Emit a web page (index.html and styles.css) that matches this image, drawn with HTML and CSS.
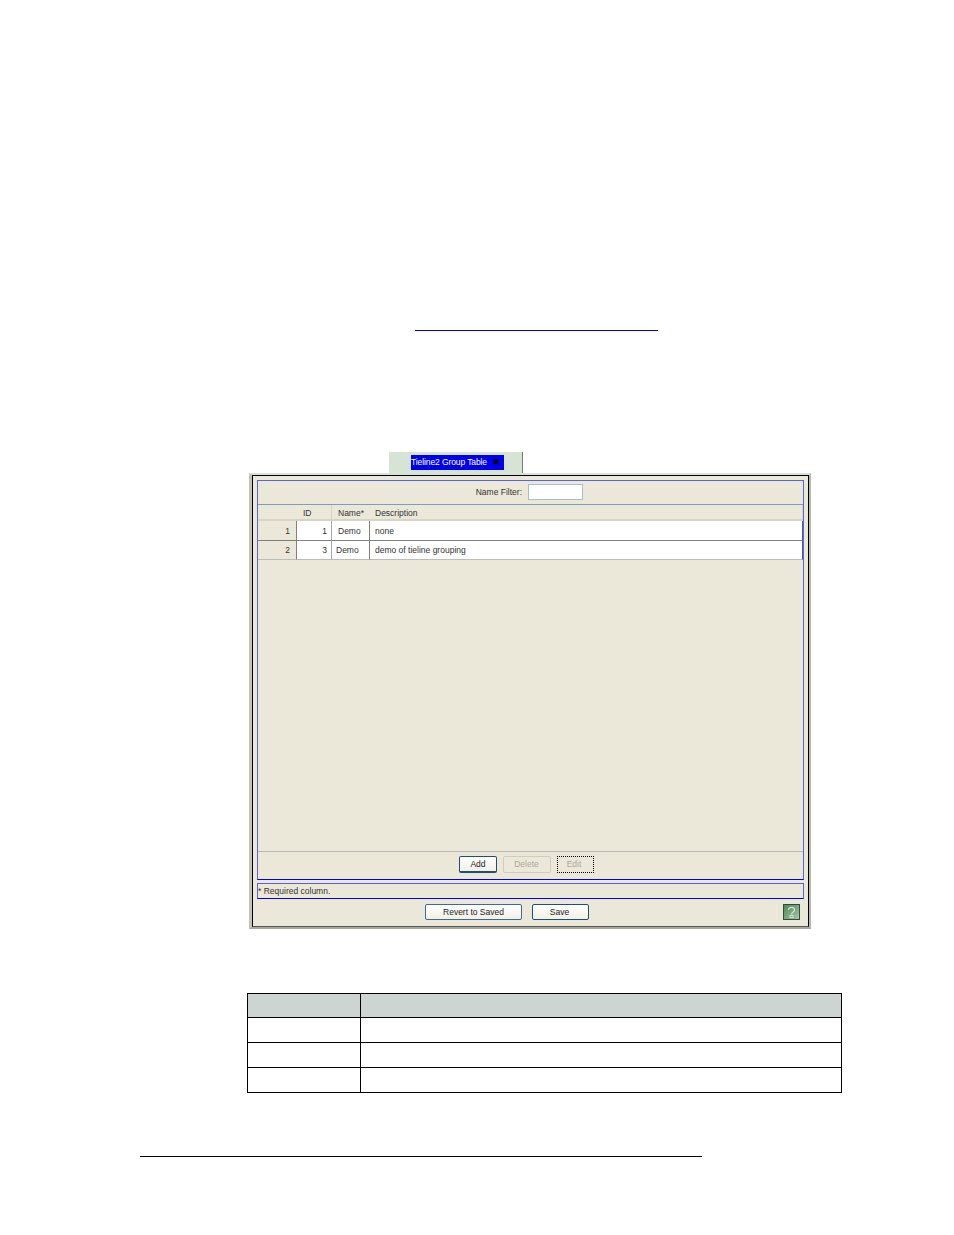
FILE: index.html
```html
<!DOCTYPE html>
<html lang="en">
<head>
    <meta charset="UTF-8">
    <title>Tieline2 Group Table</title>
    <link rel="stylesheet" href="styles.css">
</head>
<body>
    <div class="link-rule"></div>

    <div class="figure">
        <div class="tab">
            <span class="tab-title">Tieline2 Group Table<span class="tab-close">✖</span></span>
        </div>
        <div class="window">
            <div class="window-inner">
                <div class="panel">
                    <div class="filter-row">
                        <label class="filter-label">Name Filter:</label>
                        <input class="filter-input" type="text">
                    </div>
                    <table class="grid">
                        <colgroup>
                            <col class="col-head">
                            <col class="col-id">
                            <col class="col-name">
                            <col>
                        </colgroup>
                        <thead>
                            <tr>
                                <th></th>
                                <th class="th-id">ID</th>
                                <th class="th-name">Name*</th>
                                <th class="th-desc">Description</th>
                            </tr>
                        </thead>
                        <tbody>
                            <tr>
                                <td class="row-head">1</td>
                                <td class="cell-id">1</td>
                                <td class="cell-name">Demo</td>
                                <td class="cell-desc">none</td>
                            </tr>
                            <tr>
                                <td class="row-head">2</td>
                                <td class="cell-id">3</td>
                                <td class="cell-name cell-name-tight">Demo</td>
                                <td class="cell-desc">demo of tieline grouping</td>
                            </tr>
                        </tbody>
                    </table>
                    <div class="grid-space"></div>
                    <div class="button-bar">
                        <button class="btn btn-add">Add</button>
                        <button class="btn btn-delete" disabled>Delete</button>
                        <button class="btn btn-edit" disabled>Edit</button>
                    </div>
                </div>
                <div class="required-note">* Required column.</div>
                <div class="footer-row">
                    <button class="btn btn-revert">Revert to Saved</button>
                    <button class="btn btn-save">Save</button>
                    <div class="help-icon">
                        <svg width="17" height="16" viewBox="0 0 17 16">
                            <defs>
                                <linearGradient id="helpBg" x1="0" y1="0" x2="1" y2="1">
                                    <stop offset="0" stop-color="#4f8458"/>
                                    <stop offset="1" stop-color="#a5c8a8"/>
                                </linearGradient>
                            </defs>
                            <rect x="0.5" y="0.5" width="16" height="15" fill="url(#helpBg)" stroke="#2f4f38"/>
                            <path d="M5.5 6C5.5 2.5 11.5 2.5 11.5 6C11.5 8 8.5 8 8.5 10.5" fill="none" stroke="#d4e4d2" stroke-width="1.2"/>
                            <rect x="7" y="11.5" width="3" height="2" fill="none" stroke="#d4e4d2" stroke-width="0.9"/>
                        </svg>
                    </div>
                </div>
            </div>
        </div>
    </div>

    <table class="info-table">
        <colgroup>
            <col class="info-col">
            <col>
        </colgroup>
        <thead>
            <tr><th></th><th></th></tr>
        </thead>
        <tbody>
            <tr><td></td><td></td></tr>
            <tr><td></td><td></td></tr>
            <tr><td></td><td></td></tr>
        </tbody>
    </table>

    <div class="footer-rule"></div>
</body>
</html>
```

FILE: styles.css
```css
* {
    box-sizing: border-box;
}

body {
    margin: 0;
    background: #fff;
    font-family: 'Liberation Sans', Arial, sans-serif;
}

.link-rule {
    width: 243px;
    height: 1px;
    margin: 330px 0 0 415px;
    background: #0000c8;
}

.figure {
    width: 562px;
    margin: 121px 0 0 249px;
    font-size: 8.5px;
    color: #333;
}

.tab {
    width: 134px;
    height: 21px;
    margin-left: 140px;
    padding: 3px 0 0 22px;
    background: #d6e4d6;
    border-right: 1px solid #777;
}

.tab-title {
    display: block;
    position: relative;
    width: 93px;
    height: 15px;
    line-height: 15px;
    font-size: 8.5px;
    letter-spacing: -0.1px;
    background: #0000ee;
    color: #fff;
}

.tab-close {
    position: absolute;
    right: 4px;
    top: 0;
    font-family: 'DejaVu Sans', sans-serif;
    font-size: 9px;
    font-weight: bold;
    letter-spacing: 0;
    color: #000;
}

.window {
    height: 456px;
    border-style: solid;
    border-width: 2px 2px 2px 3px;
    border-color: #d6e4d6 #b8b8a8 #a8a89c #c4c4b4;
    background: #ebe8d9;
}

.window-inner {
    height: 100%;
    padding: 4px 4px 0 4px;
    border: 1px solid #000;
    border-bottom-color: #555;
    display: flex;
    flex-direction: column;
}

.panel {
    height: 400px;
    display: flex;
    flex-direction: column;
    border: 1px solid #5a62e4;
    border-bottom-color: #0000e0;
}

.filter-row {
    height: 24px;
    padding: 3px 220px 4px 0;
    display: flex;
    justify-content: flex-end;
    align-items: center;
    gap: 6px;
    border-bottom: 1px solid #7d9cc0;
}

.filter-input {
    width: 55px;
    height: 16px;
    padding: 0;
    background: #fff;
    border: 1px solid #a9bcd0;
    border-radius: 0;
    outline: none;
}

.grid {
    width: 545px;
    table-layout: fixed;
    border-collapse: separate;
    border-spacing: 0;
    font-size: 8.5px;
    color: #333;
}

.col-head {
    width: 39px;
}

.col-id {
    width: 35px;
}

.col-name {
    width: 38px;
}

.grid th {
    height: 16px;
    padding: 1px 0 0 0;
    font-weight: normal;
    text-align: left;
    border-bottom: 2px solid #d8d4c4;
}

.grid .th-id {
    padding-left: 6px;
    border-right: 1px solid #d8d4c4;
}

.grid .th-name {
    padding-left: 6px;
}

.grid .th-desc {
    padding-left: 5px;
    border-right: 1px solid #d8d4c4;
}

.grid td {
    height: 19px;
    padding: 0;
    background: #fff;
    border-bottom: 1px solid #808080;
}

.grid tr:first-child td {
    height: 20px;
}

.grid tr:last-child td {
    border-bottom-color: #bcbcb8;
}

.grid .row-head {
    padding-right: 6px;
    text-align: right;
    background: #ebe8d9;
    border-right: 1px solid #808080;
    border-bottom-color: #808080;
}

.grid .cell-id {
    padding-right: 4px;
    text-align: right;
    border-right: 1px solid #a8a8a8;
}

.grid .cell-name {
    padding-left: 6px;
    border-right: 1px solid #808080;
}

.grid .cell-name-tight {
    padding-left: 4px;
}

.grid .cell-desc {
    padding-left: 5px;
    border-right: 1px solid #4a5aa8;
}

.grid-space {
    flex: 1;
}

.button-bar {
    height: 28px;
    padding: 4px 0 0 201px;
    display: flex;
    align-items: flex-start;
    gap: 6px;
    border-top: 1px solid #b8b8b4;
}

.btn {
    height: 17px;
    padding: 0;
    font-family: inherit;
    font-size: 8.5px;
    color: #222;
    background: linear-gradient(#fff, #f2f0e6);
    border: 1px solid #3c6a94;
    border-radius: 2px;
}

.btn-add {
    width: 38px;
    border-width: 1px 1px 2px 1px;
    border-color: #1f4f78;
}

.btn-delete {
    width: 48px;
    padding: 0 1px 1px 0;
    color: #a8a89c;
    background: #ebe8d9;
    border-color: #cfccbc;
}

.btn-edit {
    width: 37px;
    padding: 0 3px 1px 0;
    color: #a8a89c;
    background: #ebe8d9;
    border: 1px dotted #000;
    border-radius: 0;
}

.required-note {
    height: 16px;
    margin-top: 3px;
    line-height: 15px;
    font-size: 8.5px;
    border: 1px solid #5a62e4;
    border-bottom-color: #0000e0;
}

.footer-row {
    margin-top: 5px;
    padding-left: 168px;
    display: flex;
    align-items: flex-start;
}

.btn-revert {
    width: 97px;
    height: 16px;
}

.btn-save {
    width: 57px;
    height: 16px;
    margin-left: 10px;
    padding-right: 2px;
    border-color: #1f4f78;
}

.help-icon {
    width: 17px;
    height: 16px;
    margin-left: 194px;
}

.help-icon svg {
    display: block;
}

.info-table {
    width: 595px;
    margin: 64px 0 0 247px;
    table-layout: fixed;
    border-collapse: collapse;
}

.info-col {
    width: 113px;
}

.info-table th,
.info-table td {
    height: 25px;
    padding: 0;
    border: 1px solid #000;
}

.info-table th {
    height: 24px;
    background: #cdd5d3;
}

.footer-rule {
    width: 562px;
    height: 1px;
    margin: 63px 0 0 140px;
    background: #000;
}
```
